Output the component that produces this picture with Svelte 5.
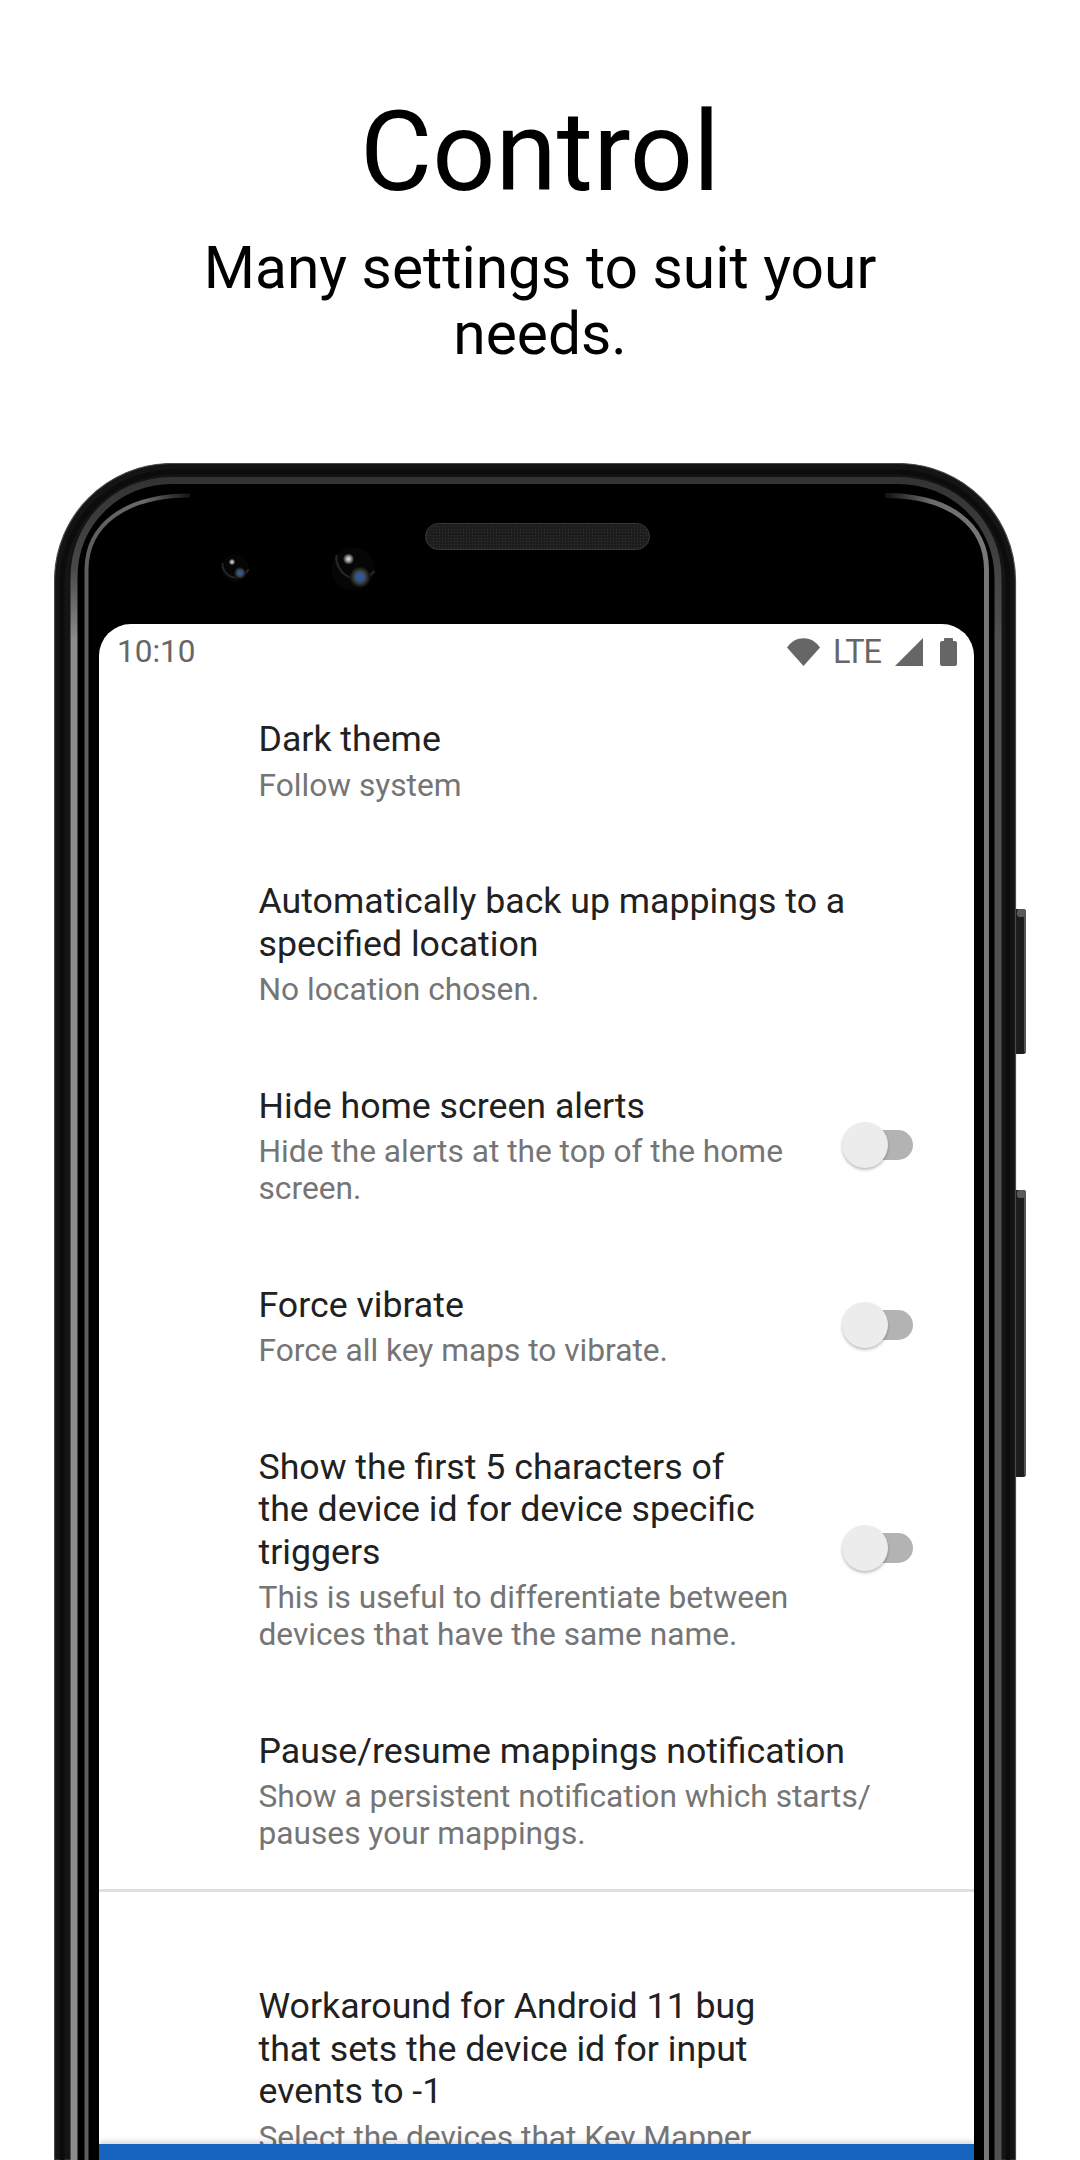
<script>
  const rows = [
    { title: ['Dark theme'], summary: ['Follow system'] },
    { title: ['Automatically back up mappings to a', 'specified location'], summary: ['No location chosen.'] },
    { title: ['Hide home screen alerts'], summary: ['Hide the alerts at the top of the home', 'screen.'], toggle: true },
    { title: ['Force vibrate'], summary: ['Force all key maps to vibrate.'], toggle: true },
    { title: ['Show the first 5 characters of', 'the device id for device specific', 'triggers'], summary: ['This is useful to differentiate between', 'devices that have the same name.'], toggle: true },
    { title: ['Pause/resume mappings notification'], summary: ['Show a persistent notification which starts/', 'pauses your mappings.'] }
  ];
  const last = {
    title: ['Workaround for Android 11 bug', 'that sets the device id for input', 'events to -1'],
    summary: ['Select the devices that Key Mapper']
  };
</script>

{#snippet row(r)}
  <div class="row">
    <div class="text">
      <div class="title">{#each r.title as line}<span>{line}</span>{/each}</div>
      <div class="summary">{#each r.summary as line}<span>{line}</span>{/each}</div>
    </div>
    {#if r.toggle}
      <div class="switch"><div class="track"></div><div class="thumb"></div></div>
    {/if}
  </div>
{/snippet}

<div class="page">
  <header>
    <h1>Control</h1>
    <p>Many settings to suit your needs.</p>
  </header>

  <div class="phone">
    <svg class="bezel" viewBox="54 463 972 1697" width="972" height="1697" aria-hidden="true">
      <defs>
        <linearGradient id="fadeL" gradientUnits="userSpaceOnUse" x1="86" y1="0" x2="192" y2="0">
          <stop offset="0" stop-color="#5e5e5e"/>
          <stop offset="0.55" stop-color="#6a6a6a"/>
          <stop offset="1" stop-color="#111"/>
        </linearGradient>
        <linearGradient id="fadeR" gradientUnits="userSpaceOnUse" x1="986" y1="0" x2="885" y2="0">
          <stop offset="0" stop-color="#787878"/>
          <stop offset="0.55" stop-color="#6a6a6a"/>
          <stop offset="1" stop-color="#111"/>
        </linearGradient>
        <linearGradient id="ringL" gradientUnits="userSpaceOnUse" x1="74" y1="480" x2="74" y2="640">
          <stop offset="0" stop-color="#333"/>
          <stop offset="0.55" stop-color="#484848"/>
          <stop offset="1" stop-color="#8c8c8c"/>
        </linearGradient>
        <linearGradient id="ringR" gradientUnits="userSpaceOnUse" x1="998" y1="480" x2="998" y2="640">
          <stop offset="0" stop-color="#333"/>
          <stop offset="1" stop-color="#505050"/>
        </linearGradient>
        <pattern id="mesh" width="3" height="3" patternUnits="userSpaceOnUse">
          <rect width="3" height="3" fill="#1c1c1c"/>
          <circle cx="1.5" cy="1.5" r="0.7" fill="#303030"/>
        </pattern>
        <radialGradient id="glint">
          <stop offset="0" stop-color="#e8e8e8"/>
          <stop offset="0.45" stop-color="#999"/>
          <stop offset="1" stop-color="#111"/>
        </radialGradient>
        <radialGradient id="lens">
          <stop offset="0" stop-color="#2a5ca8"/>
          <stop offset="0.4" stop-color="#34557f"/>
          <stop offset="0.6" stop-color="#3c3c3c"/>
          <stop offset="1" stop-color="#080808"/>
        </radialGradient>
      </defs>

      <!-- side buttons -->
      <g>
        <rect x="1010" y="909" width="16" height="145" rx="3" fill="#1c1c1c"/>
        <rect x="1017" y="909" width="9" height="8" rx="3" fill="#5a5a5a"/>
        <rect x="1024" y="914" width="2" height="138" fill="#555"/>
        <rect x="1010" y="1190" width="16" height="287" rx="3" fill="#1c1c1c"/>
        <rect x="1017" y="1190" width="9" height="8" rx="3" fill="#5a5a5a"/>
        <rect x="1024" y="1195" width="2" height="280" fill="#555"/>
      </g>

      <!-- outer shell -->
      <path d="M54.5 2160 V581 C54.5 516 107 463.5 172 463.5 H898 C963 463.5 1015.5 516 1015.5 581 V2160 Z" fill="#141414" stroke="#4a4a4a" stroke-width="1.2"/>
      <path d="M62 2160 V581 C62 522 112 472 172 472 H898 C958 472 1008 522 1008 581 V2160" fill="none" stroke="#0c0c0c" stroke-width="5"/>

      <!-- inner ring and black face -->
      <path d="M74 2160 V578 C74 522 118 480.5 172 480.5 H898 C952 480.5 998 522 998 578 V2160 Z" fill="#000"/>
      <path d="M74 2160 V578 C74 522 118 480.5 172 480.5 H540" fill="none" stroke="url(#ringL)" stroke-width="7"/>
      <path d="M998 2160 V578 C998 522 952 480.5 898 480.5 H540" fill="none" stroke="url(#ringR)" stroke-width="7"/>

      <!-- inner highlights fading along the top -->
      <path d="M86.5 2160 V570 C86.5 525 125 495.5 190 495.5" fill="none" stroke="url(#fadeL)" stroke-width="4"/>
      <path d="M986.5 2160 V570 C986.5 525 950 495.5 885 495.5" fill="none" stroke="url(#fadeR)" stroke-width="5"/>

      <!-- speaker -->
      <rect x="425.5" y="523.5" width="224" height="26" rx="13" fill="url(#mesh)" stroke="#383838" stroke-width="1"/>

      <!-- front cameras -->
      <g>
        <circle cx="235" cy="568" r="13.5" fill="#060606"/>
        <path d="M222.5 563 A13.5 13.5 0 0 0 248.5 569" fill="none" stroke="#262626" stroke-width="1.8"/>
        <circle cx="240" cy="573" r="6" fill="url(#lens)"/>
        <circle cx="232" cy="562" r="3.2" fill="url(#glint)"/>
      </g>
      <g>
        <circle cx="353" cy="569" r="21.5" fill="#060606"/>
        <path d="M336.5 555 A21.5 21.5 0 0 0 374.5 571" fill="none" stroke="#262626" stroke-width="2.2"/>
        <circle cx="360" cy="577" r="10.5" fill="url(#lens)"/>
        <circle cx="348.5" cy="559" r="5.5" fill="url(#glint)"/>
      </g>
    </svg>

    <div class="screen">
      <div class="status">
        <span class="time">10:10</span>
        <div class="icons">
          <svg width="33" height="28" viewBox="0 0 33 28"><path d="M0 9.5 C8 -3 25 -3 33 9.5 L16.5 28 Z" fill="#666"/></svg>
          <span class="lte">LTE</span>
          <svg width="28" height="28" viewBox="0 0 28 28"><path d="M28 0 V28 H0 Z" fill="#666"/></svg>
          <svg class="battery" width="17" height="28" viewBox="0 0 17 28"><path d="M4 3 V1 a1 1 0 0 1 1 -1 H12 a1 1 0 0 1 1 1 V3 H15 a2 2 0 0 1 2 2 V26 a2 2 0 0 1 -2 2 H2 a2 2 0 0 1 -2 -2 V5 a2 2 0 0 1 2 -2 Z" fill="#666"/></svg>
        </div>
      </div>

      <div class="list">
        {#each rows as r}
          {@render row(r)}
        {/each}
        <div class="divider"></div>
        {@render row(last)}
      </div>

      <div class="bar"></div>
    </div>
  </div>
</div>

<style>
  :global(body) {
    margin: 0;
    background: #fff;
  }
  .page {
    width: 1080px;
    height: 2160px;
    overflow: hidden;
    background: #fff;
    font-family: Roboto, "Liberation Sans", sans-serif;
  }
  header {
    padding-top: 87px;
    text-align: center;
    color: #000;
  }
  h1 {
    margin: 0;
    font-size: 111px;
    line-height: 130px;
    font-weight: 400;
  }
  header p {
    margin: 18px auto 0;
    width: 720px;
    font-size: 58.7px;
    line-height: 66px;
  }
  .phone {
    position: relative;
    box-sizing: border-box;
    margin: 96px 0 0 54px;
    width: 962px;
    height: 1697px;
    padding: 161px 42px 0 45px;
  }
  .bezel {
    position: absolute;
    left: 0;
    top: 0;
  }
  .screen {
    position: relative;
    height: 1536px;
    display: flex;
    flex-direction: column;
    overflow: hidden;
    background: #fff;
    border-radius: 32px 32px 0 0;
  }
  .status {
    flex: none;
    height: 55.5px;
    box-sizing: border-box;
    padding: 13px 17.5px 0 18px;
    display: flex;
    justify-content: space-between;
    align-items: flex-start;
    color: #666;
  }
  .time {
    font-size: 31.5px;
    line-height: 30px;
  }
  .icons {
    display: flex;
    align-items: center;
  }
  .lte {
    width: 50px;
    margin: 1px 10px 0 15px;
    font-size: 32.5px;
    line-height: 28px;
    letter-spacing: -1px;
    white-space: nowrap;
    text-indent: -2px;
  }
  .battery {
    margin-left: 16.5px;
  }
  .list {
    flex: 1;
    min-height: 0;
    overflow: hidden;
  }
  .row {
    display: flex;
    align-items: center;
    padding: 38.5px 61px 38px 159.5px;
  }
  .text {
    flex: 1;
    min-width: 0;
  }
  .title span,
  .summary span {
    display: block;
    white-space: nowrap;
  }
  .title {
    font-size: 35.7px;
    line-height: 42.5px;
    color: #212121;
  }
  .summary {
    margin-top: 6px;
    font-size: 31.7px;
    line-height: 37px;
    color: #757575;
  }
  .switch {
    position: relative;
    flex: none;
    width: 71px;
    height: 46px;
    margin-top: -2px;
  }
  .track {
    position: absolute;
    left: 4px;
    right: 0;
    top: 8px;
    height: 30px;
    border-radius: 15px;
    background: #b3b3b3;
  }
  .thumb {
    position: absolute;
    left: 0;
    top: 0;
    width: 46px;
    height: 46px;
    border-radius: 50%;
    background: #ececec;
    box-shadow: 0 2px 3px rgba(0, 0, 0, 0.25);
  }
  .divider {
    height: 3px;
    background: #e0e0e0;
    margin: -1px 0 54.5px;
  }
  .bar {
    position: relative;
    flex: none;
    height: 16px;
    background: #1565c0;
    box-shadow: 0 -3px 5px rgba(0, 0, 0, 0.15);
  }
</style>
